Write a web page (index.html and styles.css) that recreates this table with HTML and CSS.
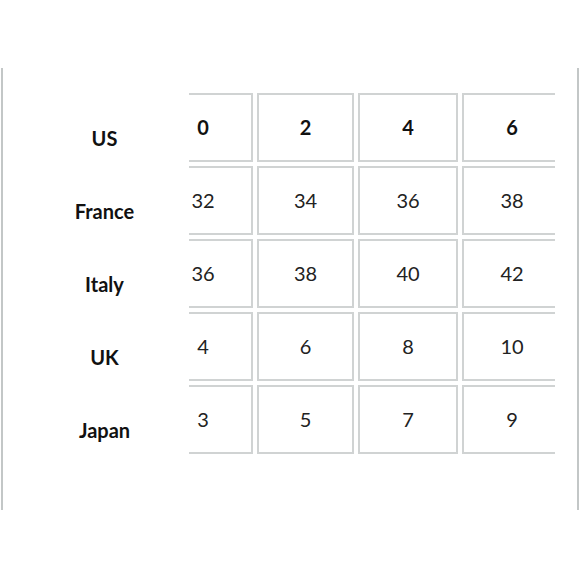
FILE: index.html
```html
<!DOCTYPE html>
<html>
<head>
<meta charset="utf-8">
<link rel="stylesheet" href="styles.css">
</head>
<body>
<div class="frame">
  <div class="chart">
    <div class="label">US</div>
    <div class="cell c1 head">0</div>
    <div class="cell c2 head">2</div>
    <div class="cell c3 head">4</div>
    <div class="cell c4 head">6</div>

    <div class="label">France</div>
    <div class="cell c1">32</div>
    <div class="cell c2">34</div>
    <div class="cell c3">36</div>
    <div class="cell c4">38</div>

    <div class="label">Italy</div>
    <div class="cell c1">36</div>
    <div class="cell c2">38</div>
    <div class="cell c3">40</div>
    <div class="cell c4">42</div>

    <div class="label">UK</div>
    <div class="cell c1">4</div>
    <div class="cell c2">6</div>
    <div class="cell c3">8</div>
    <div class="cell c4">10</div>

    <div class="label">Japan</div>
    <div class="cell c1">3</div>
    <div class="cell c2">5</div>
    <div class="cell c3">7</div>
    <div class="cell c4">9</div>
  </div>
</div>
</body>
</html>
```
FILE: styles.css
```css
html, body {
  margin: 0;
  padding: 0;
  background: #fff;
}
body {
  font-family: Lato, "Open Sans", "Noto Sans", sans-serif;
  color: #111;
}
.frame {
  margin: 68px 0 0 1px;
  width: 578px;
  height: 442px;
  box-sizing: border-box;
  border-left: 2px solid #c3c7c7;
  border-right: 2px solid #c3c7c7;
  padding-top: 25px;
}
.chart {
  display: grid;
  grid-template-columns: 182px 64px 97px 100px 93px;
  grid-auto-rows: 69px;
  column-gap: 4px;
  row-gap: 4px;
}
.label {
  display: flex;
  align-items: center;
  justify-content: center;
  padding: 20px 0 0 21px;
  box-sizing: border-box;
  font-size: 20px;
  font-weight: 700;
}
.cell {
  display: flex;
  align-items: center;
  justify-content: center;
  box-sizing: border-box;
  border: 2px solid #d0d3d3;
  font-size: 20px;
  font-weight: 400;
  color: #222;
  padding-bottom: 1px;
}
.cell.head {
  font-weight: 700;
  color: #111;
}
.c1 {
  border-left: none;
  padding-right: 34px;
}
.c4 {
  border-right: none;
  padding-left: 5px;
}
```
